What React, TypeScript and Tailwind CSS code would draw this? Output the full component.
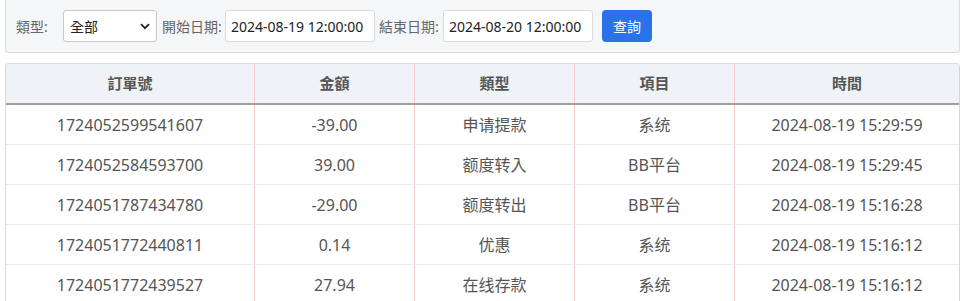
import React from "react";

type Row = {
  id: string;
  amount: string;
  kind: string;
  item: string;
  time: string;
};

const ROWS: Row[] = [
  { id: "1724052599541607", amount: "-39.00", kind: "申请提款", item: "系统", time: "2024-08-19 15:29:59" },
  { id: "1724052584593700", amount: "39.00", kind: "额度转入", item: "BB平台", time: "2024-08-19 15:29:45" },
  { id: "1724051787434780", amount: "-29.00", kind: "额度转出", item: "BB平台", time: "2024-08-19 15:16:28" },
  { id: "1724051772440811", amount: "0.14", kind: "优惠", item: "系统", time: "2024-08-19 15:16:12" },
  { id: "1724051772439527", amount: "27.94", kind: "在线存款", item: "系统", time: "2024-08-19 15:16:12" },
];

// column widths, last one takes the rest
const COLS = ["w-[249px]", "w-[160px]", "w-[160px]", "w-[160px]", "flex-1"];
const HEADERS = ["訂單號", "金額", "類型", "項目", "時間"];

const App: React.FC = () => {
  return (
    <div
      className="w-[975px] h-[301px] overflow-hidden bg-white"
      style={{ fontFamily: '"Noto Sans", "Noto Sans CJK TC", "Noto Sans CJK SC", sans-serif' }}
    >
      {/* Filter bar */}
      <div className="ml-[5px] w-[955px] h-[53px] bg-[#f5f6f8] border border-t-0 border-[#d9dce1] rounded-b-[4px] flex items-center pl-[10px] text-[14px]">
        <span className="text-[#666] w-[32px]">類型:</span>
        <div className="relative ml-[15px] w-[94px] h-[32px] bg-white border border-[#c8c8c8] rounded-[3px] flex items-center pl-[6px] text-[#222]">
          全部
          <svg className="absolute right-[6px] top-[12px]" width="10" height="7" viewBox="0 0 10 7">
            <path d="M1 1.2 L5 5.2 L9 1.2" fill="none" stroke="#222" strokeWidth="1.8" />
          </svg>
        </div>
        <span className="text-[#666] ml-[5px] w-[60px]">開始日期:</span>
        <div className="ml-[3px] w-[150px] h-[32px] bg-white border border-[#dcdcdc] rounded-[3px] flex items-center pl-[5px] text-[#222]">
          2024-08-19 12:00:00
        </div>
        <span className="text-[#666] ml-[4px] w-[61px]">結束日期:</span>
        <div className="ml-[3px] w-[150px] h-[32px] bg-white border border-[#dcdcdc] rounded-[3px] flex items-center pl-[5px] text-[#222]">
          2024-08-20 12:00:00
        </div>
        <button className="ml-[9px] w-[50px] h-[32px] bg-[#2a72ea] rounded-[4px] text-white text-[14px]">
          查詢
        </button>
      </div>

      {/* Records table */}
      <div className="ml-[5px] mt-[10px] w-[955px] border border-[#d9dce1] border-r-[#f3c9cd] rounded-t-[4px] overflow-hidden">
        <div className="flex h-[41px] bg-[#eff2f6] border-b-2 border-[#a59c9c] text-[15px] font-bold text-[#555]">
          {HEADERS.map((h, i) => (
            <div
              key={h}
              className={`${COLS[i]} flex items-center justify-center ${i < 4 ? "border-r border-[#f6ccd0]" : ""}`}
            >
              {h}
            </div>
          ))}
        </div>
        {ROWS.map((r) => (
          <div key={r.id} className="flex h-[40px] border-b border-[#ebebeb] text-[16px] text-[#555]">
            {[r.id, r.amount, r.kind, r.item, r.time].map((v, i) => (
              <div
                key={i}
                className={`${COLS[i]} flex items-center justify-center ${i < 4 ? "border-r border-[#f6ccd0]" : ""}`}
              >
                {v}
              </div>
            ))}
          </div>
        ))}
      </div>
    </div>
  );
};

export default App;
